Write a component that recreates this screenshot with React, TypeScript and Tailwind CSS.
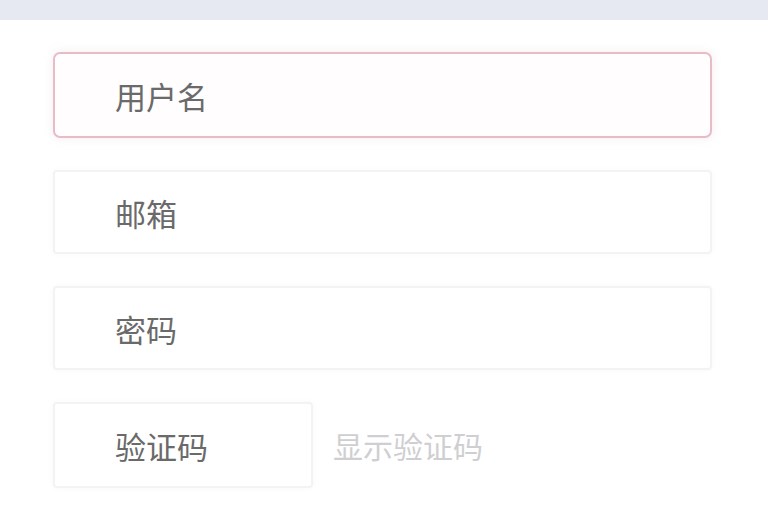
const FIELDS = ["邮箱", "密码"];

function Field({ label, active = false }: { label: string; active?: boolean }) {
  return (
    <div
      className={
        active
          ? "flex h-[86px] items-center rounded-[7px] border-2 border-[#e8bcc4] bg-[#fffdfd] pl-[60px] shadow-[0_0_10px_rgba(220,200,205,0.35)]"
          : "flex h-[84px] items-center rounded-[4px] border-2 border-[#f3f3f5] bg-white pl-[60px] shadow-[0_0_6px_rgba(0,0,0,0.03)]"
      }
    >
      <span className="text-[31px] leading-none text-[#6a6a6a]">{label}</span>
    </div>
  );
}

export default function App() {
  return (
    <div className="h-[510px] w-[768px] overflow-hidden bg-white font-['Noto_Sans_CJK_SC','Noto_Sans',sans-serif]">
      <div className="h-[20px] bg-[#e7e9f2]" />
      <div className="flex flex-col gap-[32px] pl-[53px] pr-[56px] pt-[32px]">
        <Field label="用户名" active />
        {FIELDS.map((f) => (
          <Field key={f} label={f} />
        ))}
        <div className="flex items-center gap-[20px]">
          <div className="flex h-[86px] w-[260px] items-center rounded-[4px] border-2 border-[#f3f3f5] bg-white pl-[60px] shadow-[0_0_6px_rgba(0,0,0,0.03)]">
            <span className="text-[31px] leading-none text-[#6a6a6a]">验证码</span>
          </div>
          <span className="text-[30px] leading-none text-[#cfcfd2]">显示验证码</span>
        </div>
      </div>
    </div>
  );
}
